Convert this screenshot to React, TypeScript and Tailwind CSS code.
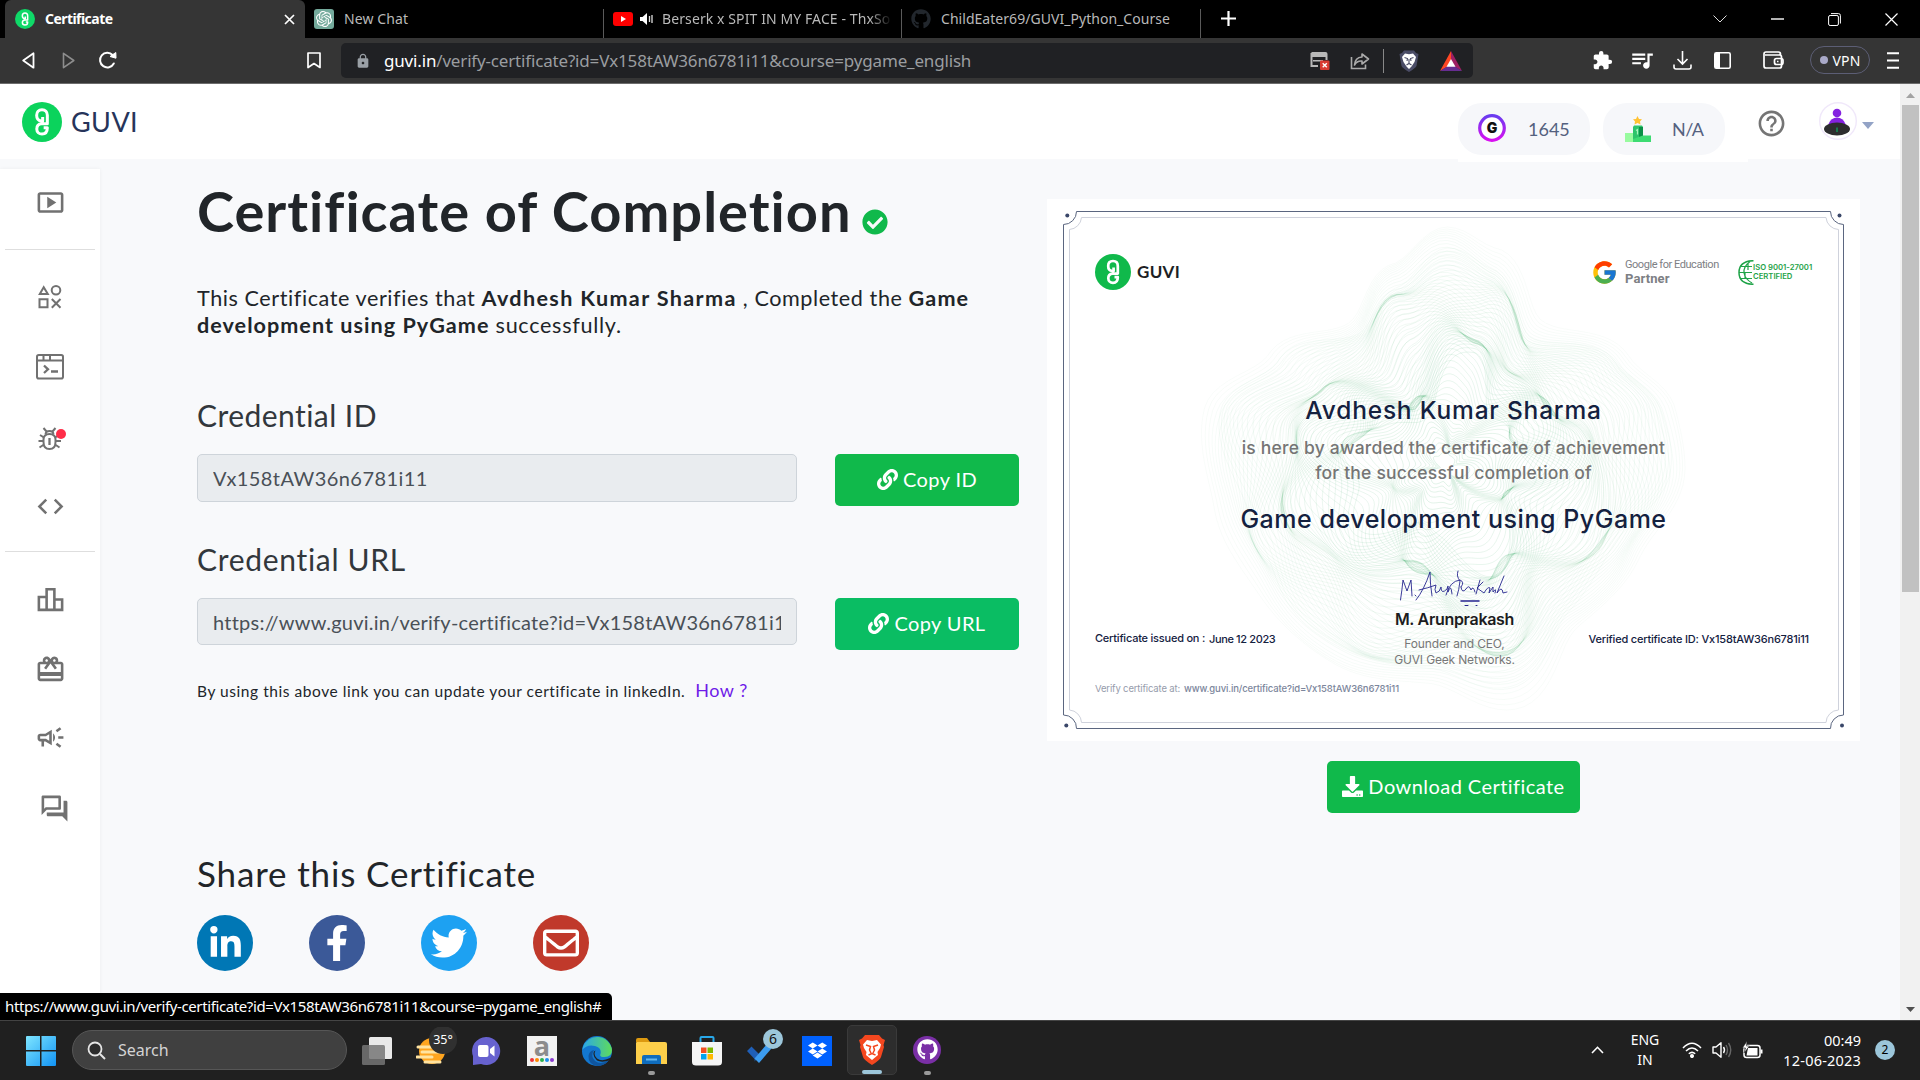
import React from "react";
import {
  FaCheckCircle,
  FaDownload,
  FaDropbox,
  FaFacebookF,
  FaGithub,
  FaLink,
  FaLinkedinIn,
  FaRegEnvelope,
  FaTwitter,
} from "react-icons/fa";
import { FcGoogle } from "react-icons/fc";
import {
  MdCode,
  MdExtension,
  MdHelpOutline,
  MdLock,
  MdOutlineCampaign,
  MdOutlineForum,
  MdOutlineLeaderboard,
  MdOutlineRedeem,
  MdOutlineSmartDisplay,
  MdQueueMusic,
} from "react-icons/md";
import { SiOpenai } from "react-icons/si";

const UI = "font-['Noto_Sans',sans-serif]";
const PAGE = "font-['Lato',sans-serif]";
const CERT = "font-['Inter',sans-serif]";

function GuviMark({ size, color }: { size: number; color: string }) {
  return (
    <svg width={size} height={size} viewBox="0 0 36 36" className="shrink-0">
      <circle cx="18" cy="18" r="18" fill={color} />
      <path
        d="M18.6 13.600V17H17.200C14.600 16.800 13.200 14.800 13.200 12C13.200 9 15 7 18 7C21 7 22.800 9 22.800 12V19.600H17.6C15 19.800 13.300 21.600 13.300 24.2C13.3 27 15.3 28.8 18 28.8C21 28.8 22.8 27 22.8 23.200H19.500"
        fill="none"
        stroke="#fff"
        strokeWidth="2.7"
        strokeLinejoin="round"
      />
    </svg>
  );
}

function TabBar() {
  return (
    <div className={`flex h-[38px] shrink-0 bg-black text-[14px] leading-[38px] text-[#b9b9b9] ${UI}`}>
      <div className="ml-[5px] flex h-[38px] w-[300px] items-center rounded-t-[6px] bg-[#353535] pl-[10px] text-white">
        <GuviMark size={20} color="#0fd968" />
        <span className="ml-[10px] text-[14px] font-bold tracking-[-0.55px]">Certificate</span>
        <svg width="11" height="11" viewBox="0 0 11 11" className="ml-auto mr-[10px]">
          <path d="M1 1L10 10M10 1L1 10" stroke="#fff" strokeWidth="1.7" />
        </svg>
      </div>
      <div className="flex w-[298px] items-center pl-[9px]">
        <span className="flex h-5 w-5 items-center justify-center rounded-[3px] bg-[#74aa9c] text-white">
          <SiOpenai size={16} />
        </span>
        <span className="ml-[10px] tracking-[0.1px]">New Chat</span>
      </div>
      <div className="mt-[9px] h-[29px] w-px bg-[#5a5a5a]" />
      <div className="flex w-[297px] items-center pl-[9px]">
        <svg width="20" height="14" viewBox="0 0 20 14" className="shrink-0">
          <rect width="20" height="14" rx="3" fill="#f00" />
          <path d="M8 4V10L13 7Z" fill="#fff" />
        </svg>
        <svg width="14" height="12" viewBox="0 0 14 12" className="ml-[7px] shrink-0">
          <path d="M0 4H2.500L7 0V12L2.500 8H0Z" fill="#fff" />
          <path d="M9.500 3V9M12 2V10" stroke="#ddd" strokeWidth="1.300" />
        </svg>
        <span className="ml-[8px] w-[230px] overflow-hidden whitespace-nowrap tracking-[0.1px] [mask-image:linear-gradient(to_right,black_90%,transparent)]">
          Berserk x SPIT IN MY FACE - ThxSo
        </span>
      </div>
      <div className="mt-[9px] h-[29px] w-px bg-[#5a5a5a]" />
      <div className="flex w-[298px] items-center pl-[9px]">
        <FaGithub size={20} color="#22272d" />
        <span className="ml-[10px] tracking-[0.04px]">ChildEater69/GUVI_Python_Course</span>
      </div>
      <div className="mt-[9px] h-[29px] w-px bg-[#5a5a5a]" />
      <svg width="15" height="15" viewBox="0 0 15 15" className="ml-[20px] mt-[11px]">
        <path d="M7.500 0V15M0 7.500H15" stroke="#fff" strokeWidth="2.200" />
      </svg>
      <div className="ml-auto mr-[22px] flex items-center gap-[44px]">
        <svg width="14" height="8" viewBox="0 0 14 8">
          <path d="M0.500 0.500L7 7L13.500 0.500" fill="none" stroke="#ddd" />
        </svg>
        <svg width="13" height="2" viewBox="0 0 13 2">
          <path d="M0 1H13" stroke="#fff" strokeWidth="1.400" />
        </svg>
        <svg width="13" height="13" viewBox="0 0 13 13" fill="none" stroke="#fff">
          <rect x="0.600" y="2.500" width="9.800" height="10" rx="1.500" />
          <path d="M3 0.600H10.500Q12.400 0.600 12.400 2.500V10.500" />
        </svg>
        <svg width="13" height="13" viewBox="0 0 13 13">
          <path d="M0.500 0.500L12.500 12.500M12.500 0.500L0.500 12.500" stroke="#fff" strokeWidth="1.200" />
        </svg>
      </div>
    </div>
  );
}

function ToolBar() {
  return (
    <div className={`flex h-[46px] shrink-0 items-center border-b border-[#6c6c6c] bg-[#353535] ${UI}`}>
      <svg width="13" height="17" viewBox="0 0 13 17" className="ml-[22px] mb-px">
        <path d="M11.500 1.300V15.700L1.200 8.500Z" fill="none" stroke="#fff" strokeWidth="1.800" strokeLinejoin="round" />
      </svg>
      <svg width="13" height="17" viewBox="0 0 13 17" className="mb-px ml-[27px]">
        <path d="M1.500 1.300V15.700L11.800 8.500Z" fill="none" stroke="#8d8d8d" strokeWidth="1.600" strokeLinejoin="round" />
      </svg>
      <svg width="19" height="19" viewBox="0 0 19 19" className="mb-px ml-[23px]">
        <path d="M15.800 12.500A7.300 7.300 0 1 1 14.600 4" fill="none" stroke="#fff" strokeWidth="2" strokeLinecap="round" />
        <path d="M12 5.500L17.800 1.500L18 7.200Z" fill="#fff" stroke="#fff" strokeLinejoin="round" />
      </svg>
      <svg width="14" height="17" viewBox="0 0 14 17" className="mb-px ml-[190px]">
        <path d="M1 1H13V15.500L7 11.500L1 15.500Z" fill="none" stroke="#fff" strokeWidth="1.700" strokeLinejoin="round" />
      </svg>
      <div className="ml-[20px] flex h-[35px] w-[1132px] items-center rounded-[5px] bg-[#202124]">
        <MdLock size={16} color="#9aa0a6" className="ml-[14px] shrink-0" />
        <span className="ml-[13px] whitespace-nowrap text-[17px] tracking-[-0.17px] text-[#9a9da0]">
          <span className="text-white">guvi.in</span>/verify-certificate?id=Vx158tAW36n6781i11&amp;course=pygame_english
        </span>
        <div className="ml-auto mr-[11px] flex shrink-0 items-center">
          <svg width="20" height="18" viewBox="0 0 20 18">
            <path d="M1.500 1H15.500Q16.500 1 16.500 2V8M1.500 1V14H8" fill="none" stroke="#b8b8b8" strokeWidth="2" />
            <path d="M1 1H17V5H1ZM3 8H13V9.500H3Z" fill="#b8b8b8" />
            <rect x="10" y="8.500" width="9.500" height="9.500" rx="1" fill="#d93a32" />
            <path d="M12.700 11.200L16.800 15.300M16.800 11.200L12.700 15.300" stroke="#fff" strokeWidth="1.400" />
          </svg>
          <svg width="20" height="18" viewBox="0 0 20 18" className="ml-[20px]" fill="none" stroke="#aaa" strokeWidth="1.600">
            <path d="M1.500 5V16.500H15.500V12.500" />
            <path d="M12 2L18.500 7L12 12V9Q7 8.500 4.500 13Q5 5.500 12 5Z" strokeLinejoin="round" />
          </svg>
          <div className="ml-[13px] h-[24px] w-px bg-[#888]" />
          <svg width="20" height="22" viewBox="0 0 20 22" className="ml-[15px]">
            <path d="M5 0.500H15L17 3L19.500 4L17.500 16Q16.500 18 10 22Q3.500 18 2.500 16L0.500 4L3 3Z" fill="#4a4c66" />
            <path d="M6 3.500L10 4.300L14 3.500L17 7L15.500 12L12.500 16.500L10 19L7.500 16.500L4.500 12L3 7Z" fill="#fff" />
            <path d="M5.500 7.500L8.500 8.500L8 11M14.500 7.500L11.500 8.500L12 11M10 9V13M7.500 15L10 13.500L12.500 15" fill="none" stroke="#4a4c66" strokeWidth="1.100" />
          </svg>
          <svg width="22" height="20" viewBox="0 0 22 20" className="ml-[21px]">
            <path d="M11 0L0 20L11 13.500Z" fill="#ff4724" />
            <path d="M11 0L22 20L11 13.500Z" fill="#9e1f63" />
            <path d="M0 20H22L11 13Z" fill="#662d91" />
            <path d="M11 8L6.500 15.800H15.500Z" fill="#fff" />
          </svg>
        </div>
      </div>
      <div className="mb-px ml-[119px] flex items-center text-white">
        <MdExtension size={21} />
        <MdQueueMusic size={26} className="ml-[16px]" />
        <svg width="19" height="19" viewBox="0 0 19 19" className="ml-[18px]" fill="none" stroke="#fff" strokeWidth="1.600">
          <path d="M9.500 0V13M4.500 8L9.500 13L14.500 8M1 13.500V16Q1 18 3 18H16Q18 18 18 16V13.500" />
        </svg>
        <svg width="17" height="17" viewBox="0 0 17 17" className="ml-[22px]">
          <rect x="0.800" y="0.800" width="15.400" height="15.400" rx="1.500" fill="none" stroke="#fff" strokeWidth="1.600" />
          <path d="M1 1H6V16H1Z" fill="#fff" />
        </svg>
        <svg width="21" height="18" viewBox="0 0 21 18" className="ml-[32px]" fill="none" stroke="#fff" strokeWidth="1.700">
          <path d="M17.500 4V3.500Q17.500 1 15.500 1H3Q1 1 1 3V15Q1 17 3 17H16.500Q18.500 17 18.500 15V6Q18.500 4 16.500 4H2" />
          <rect x="11.500" y="7.500" width="8.500" height="6" rx="2" />
          <path d="M14 10.500H15.500" />
        </svg>
        <div className="ml-[26px] flex h-[28px] w-[60px] items-center justify-center gap-[5px] rounded-full border-[1.5px] border-[#5c5e75] text-[14px] tracking-[0.1px]">
          <span className="h-[8px] w-[8px] rounded-full bg-[#a9a9c8]" />
          VPN
        </div>
        <svg width="12" height="17" viewBox="0 0 12 17" className="ml-[17px]">
          <path d="M0 1.200H12M0 8.500H12M0 15.800H12" stroke="#fff" strokeWidth="1.900" />
        </svg>
      </div>
    </div>
  );
}

function Header() {
  return (
    <header className={`flex h-[75px] shrink-0 bg-white ${PAGE}`}>
      <div className="ml-[22px] mt-[18px] flex h-[40px] items-center">
        <GuviMark size={40} color="#0bd35c" />
        <span className="ml-[9px] text-[27px] leading-[40px] tracking-[0.4px] text-[#26345a]">GUVI</span>
      </div>
      <div className="ml-auto mr-[8px] flex h-[78px] w-[290px] bg-white pt-[19px] text-[18px] text-[#54617f]">
        <div className="flex h-[52px] w-[132px] items-center rounded-[24px] bg-[#f6f7fa]">
          <svg width="28" height="28" viewBox="0 0 28 28" className="ml-[20px] mt-[-2px]">
            <defs>
              <linearGradient id="coin" x1="0" y1="0" x2="0" y2="1">
                <stop offset="0" stopColor="#6a3cf0" />
                <stop offset="1" stopColor="#d810f0" />
              </linearGradient>
            </defs>
            <circle cx="14" cy="14" r="12.300" fill="#fff" stroke="url(#coin)" strokeWidth="3.200" />
            <text x="14" y="19" textAnchor="middle" fontFamily="Inter" fontWeight="900" fontSize="14" fill="#111">G</text>
          </svg>
          <span className="ml-[22px]">1645</span>
        </div>
        <div className="ml-[13px] flex h-[52px] w-[122px] items-center rounded-[24px] bg-[#f6f7fa]">
          <svg width="26" height="26" viewBox="0 0 26 26" className="ml-[22px]">
            <path d="M0 17H8V26H0Z" fill="#98fb9f" />
            <path d="M8 11L9 9.500H17L18 11V26H8Z" fill="#2dc46b" />
            <path d="M14 11H18V26H14Z" fill="#0a9147" />
            <path d="M18 19.500H26V26H8V23Z" fill="#3ddb72" />
            <path d="M12.500 0L14 3L17 3.300L15 5.500L15.500 8.500L12.500 7L9.500 8.500L10 5.500L8 3.300L11 3Z" fill="#ffc233" />
            <path d="M11 14.500L12.500 13.500V18.500" stroke="#a9f5bd" strokeWidth="1.200" fill="none" />
          </svg>
          <span className="ml-[21px] tracking-[-0.6px]">N/A</span>
        </div>
      </div>
      <MdHelpOutline size={31} color="#757575" className="mt-[24px]" />
      <svg width="38" height="38" viewBox="0 0 38 38" className="ml-[32px] mt-[18px]">
        <circle cx="19" cy="19" r="18.300" fill="#fff" stroke="#f0e8fa" strokeWidth="1.400" />
        <circle cx="18" cy="11" r="4.300" fill="#8421e0" />
        <path d="M9.500 22Q12 15.500 18 15.500T26.500 22V25H9.500Z" fill="#8421e0" />
        <ellipse cx="18" cy="27" rx="13" ry="6.500" fill="#2c2c2e" />
        <path d="M17.200 25.500H18.800V30H17.200Z" fill="#168a55" />
      </svg>
      <svg width="12" height="7" viewBox="0 0 12 7" className="ml-[5px] mr-[26px] mt-[38px]">
        <path d="M0 0H12L6 7Z" fill="#93a3c6" />
      </svg>
    </header>
  );
}

function SideBar() {
  return (
    <nav className="mt-[10px] flex w-[100px] shrink-0 flex-col items-center bg-white text-[#717171] shadow-[0_0_4px_rgba(0,0,0,0.05)]">
      <MdOutlineSmartDisplay size={31} className="mt-[18px]" />
      <div className="mt-[31px] h-px w-[90px] bg-[#dedede]" />
      <svg width="24" height="24" viewBox="0 0 24 24" className="mt-[35px]" fill="none" stroke="#717171" strokeWidth="2">
        <path d="M5.700 2.200L1.800 9H9.800Z" />
        <circle cx="18" cy="5.300" r="4.300" />
        <path d="M1.500 14.200H9.500V22.200H1.500Z" />
        <path d="M13.800 14L22.500 22.700M22.500 14L13.800 22.700" />
      </svg>
      <svg width="28" height="26" viewBox="0 0 28 26" className="mt-[45px]" fill="none" stroke="#717171" strokeWidth="2">
        <rect x="1" y="1" width="26" height="23.500" rx="1.800" />
        <path d="M1 6.500H27M7.500 1V6.500M14 1V6.500" />
        <path d="M8 11.500L12 15.300L8 19M15 17.500H22" strokeWidth="2.300" />
      </svg>
      <div className="relative mt-[47px] h-[24px] w-[24px]">
        <svg width="24" height="24" viewBox="0 0 24 24" fill="none" stroke="#717171" strokeWidth="2">
          <path d="M5.500 12.500Q5.500 7 11.500 7T17.500 12.500V15Q17.500 22 11.500 22T5.500 15Z" />
          <path d="M7.500 7Q8 4 11.500 4T15.500 7M5.500 1L8.500 4.500M17.500 1L14.500 4.500M0.500 14H5M18 14H23M2 8L6 10.500M21 8L17 10.500M1.500 20.500L6 17.500M21.500 20.500L17 17.500" />
          <path d="M11.500 11V18" strokeWidth="2.300" />
        </svg>
        <span className="absolute left-[18px] top-[2px] h-[10px] w-[10px] rounded-full bg-[#ff2d48]" />
      </div>
      <MdCode size={31} className="mt-[40px]" />
      <div className="mt-[29px] h-px w-[90px] bg-[#dedede]" />
      <MdOutlineLeaderboard size={31} className="mt-[32px]" />
      <MdOutlineRedeem size={31} className="mt-[39px]" />
      <MdOutlineCampaign size={31} className="mt-[37px]" />
      <MdOutlineForum size={31} className="ml-[8px] mt-[40px]" />
    </nav>
  );
}

function CopyRow({ value, label, tint, field }: { value: string; label: string; tint: string; field: string }) {
  return (
    <div className="flex h-[52px]">
      <div className={`w-[600px] rounded-[5px] border border-[#ced4da] bg-[#e9ecef] px-[15px] ${field}`}>
        <div className="overflow-hidden whitespace-nowrap text-[20px] leading-[47px] text-[#495057]">{value}</div>
      </div>
      <button className={`ml-[38px] flex w-[184px] items-center justify-center gap-[5px] rounded-[5px] pb-[2px] text-[20px] tracking-[0.4px] text-white ${tint}`}>
        <FaLink size={21} />
        <span>{label}</span>
      </button>
    </div>
  );
}

function Details() {
  return (
    <section className={`ml-[97px] w-[822px] shrink-0 pt-[18px] text-[#212529] ${PAGE}`}>
      <h1 className="flex h-[68px] text-[56px] font-bold leading-[68px] tracking-[1px]">
        <span className="whitespace-nowrap">Certificate of Completion</span>
        <FaCheckCircle size={26} color="#10b94b" className="ml-[10px] mt-[32px]" />
      </h1>
      <p className="mt-[40px] whitespace-nowrap text-[21.6px] leading-[27px] tracking-[0.57px]">
        This Certificate verifies that <b className="tracking-[1.35px]">Avdhesh Kumar Sharma</b> , Completed the{" "}
        <b className="tracking-[1.1px]">Game</b>
        <br />
        <b className="tracking-[1.02px]">development using PyGame</b> <span className="tracking-[0.7px]">successfully.</span>
      </p>
      <h2 className="mt-[58px] text-[30px] leading-[36px] tracking-[0.45px] text-[#32373c]">Credential ID</h2>
      <div className="mt-[21px]">
        <CopyRow value="Vx158tAW36n6781i11" label="Copy ID" tint="bg-[#10b94b]" field="h-[48px] tracking-[0.43px]" />
      </div>
      <h2 className="mt-[35px] text-[30px] leading-[36px] tracking-[0.7px] text-[#32373c]">Credential URL</h2>
      <div className="mt-[21px]">
        <CopyRow
          value="https://www.guvi.in/verify-certificate?id=Vx158tAW36n6781i11"
          label="Copy URL"
          tint="bg-[#0abd63]"
          field="h-[47px] tracking-[0.24px]"
        />
      </div>
      <div className="mt-[28px] flex h-[24px] items-baseline whitespace-nowrap leading-[24px]">
        <span className="text-[15.5px] tracking-[0.56px]">By using this above link you can update your certificate in linkedIn.</span>
        <span className="ml-[10px] text-[18px] tracking-[0.5px] text-[#6f1be8]">How ?</span>
      </div>
      <h2 className="mt-[150px] text-[35px] leading-[42px] tracking-[0.85px]">Share this Certificate</h2>
      <div className="mt-[21px] flex gap-[56px] text-white">
        <span className="flex h-[56px] w-[56px] items-center justify-center rounded-full bg-[#0077b5]">
          <FaLinkedinIn size={35} />
        </span>
        <span className="flex h-[56px] w-[56px] items-center justify-center rounded-full bg-[#3b5998]">
          <FaFacebookF size={36} />
        </span>
        <span className="flex h-[56px] w-[56px] items-center justify-center rounded-full bg-[#1da1f2]">
          <FaTwitter size={36} />
        </span>
        <span className="flex h-[56px] w-[56px] items-center justify-center rounded-full bg-[#c0392b]">
          <FaRegEnvelope size={36} />
        </span>
      </div>
    </section>
  );
}

// Outer radius of the guilloche, by angle in degrees (clockwise from the right).
const RIM: [number, number][] = [
  [0, 238],
  [25, 212],
  [50, 205],
  [73, 250],
  [95, 215],
  [120, 225],
  [146, 226],
  [170, 236],
  [194, 250],
  [213, 212],
  [236, 176],
  [255, 212],
  [270, 242],
  [283, 226],
  [303, 176],
  [328, 214],
  [345, 236],
  [360, 238],
];

function rim(deg: number): number {
  for (let i = 1; i < RIM.length; i++) {
    const [b, rb] = RIM[i];
    if (deg <= b) {
      const [a, ra] = RIM[i - 1];
      const k = (1 - Math.cos((Math.PI * (deg - a)) / (b - a))) / 2;
      return ra + (rb - ra) * k;
    }
  }
  return RIM[0][1];
}

function contour(t: number, seed: number): string {
  const pts: string[] = [];
  for (let i = 0; i < 180; i++) {
    const a = (i / 180) * Math.PI * 2;
    const edge = rim(i * 2) * t + 30 * t * (1 - t);
    const fold =
      1 +
      (1 - t) *
        (0.3 * Math.sin(3 * a + 7 * t + seed) +
          0.22 * Math.sin(5 * a - 10 * t + seed * 2) +
          0.12 * Math.sin(8 * a + 13 * t + seed * 3));
    const r = edge * fold;
    const x = 400 + Math.cos(a) * r;
    const y = 270 + Math.sin(a) * r;
    pts.push(`${x.toFixed(1)} ${y.toFixed(1)}`);
  }
  return `M${pts.join("L")}Z`;
}

function CertificateArt() {
  const lines: { d: string; o: number }[] = [];
  for (let i = 0; i < 60; i++) {
    const t = 0.06 + (i / 59) * 0.94;
    lines.push({ d: contour(t, 0.6), o: 0.17 - 0.13 * t });
  }
  for (let i = 0; i < 36; i++) {
    const t = 0.35 + (i / 35) * 0.55;
    lines.push({ d: contour(t, 2.7), o: 0.16 - 0.12 * t });
  }
  return (
    <svg width="813" height="542" viewBox="0 0 813 542" className="absolute inset-0" fill="none">
      {lines.map((l, i) => (
        <path key={i} d={l.d} stroke="#1a9c4c" strokeWidth="0.8" opacity={l.o} />
      ))}
      <path
        d="M29.500 12.500H783.500A13 13 0 0 0 796.500 25.500V516A13 13 0 0 0 783.500 529.500H29.500A13 13 0 0 0 16.500 516V25.500A13 13 0 0 0 29.500 12.500Z"
        stroke="#5b6680"
      />
      <path
        d="M34.500 18.500H779A13 13 0 0 0 791.500 30.500V511A13 13 0 0 0 779 523.500H34.500A13 13 0 0 0 22.500 511V30.500A13 13 0 0 0 34.500 18.500Z"
        stroke="#cfd2dc"
      />
      <g fill="#3a4769">
        <circle cx="20.300" cy="16.500" r="2" />
        <circle cx="792.500" cy="16.500" r="2" />
        <circle cx="19.300" cy="526.500" r="2" />
        <circle cx="795" cy="526.500" r="2" />
      </g>
    </svg>
  );
}

function Certificate() {
  return (
    <div className={`relative h-[542px] w-[813px] overflow-hidden bg-white text-[#14213f] ${CERT}`}>
      <CertificateArt />
      <div className="relative flex h-full flex-col whitespace-nowrap pt-[55px]">
        <div className="flex h-[36px] items-center pl-[48px]">
          <GuviMark size={36} color="#10b94b" />
          <span className="ml-[6px] w-[456px] font-['Lato',sans-serif] text-[17px] font-bold tracking-[0.3px] text-[#1d1f24]">GUVI</span>
          <FcGoogle size={27} className="ml-[-2px] shrink-0" />
          <div className="ml-[7px] w-[113px] font-['Roboto',sans-serif] text-[#7d8084]">
            <div className="text-[11px] leading-[14px] tracking-[-0.45px]">Google for Education</div>
            <div className="text-[13px] font-bold leading-[14px] tracking-[0.1px]">Partner</div>
          </div>
          <svg width="16" height="25" viewBox="0 0 16 25" fill="none" stroke="#1fa348" strokeWidth="1.200">
            <path d="M15.500 0.700Q1 1 1 12.500T15.500 24.300" strokeWidth="1.500" />
            <path d="M12 1.500Q5 7 6 13T14 23M3 6.500H14M1 12.500H14M3 18.500H14M10 3V10M7 12V18" />
          </svg>
          <div className="ml-[-1px] mt-[2px] text-[7.7px] font-semibold leading-[8.7px] text-[#1fa348]">
            <div>ISO 9001-27001</div>
            <div>CERTIFIED</div>
          </div>
        </div>
        <div className="mt-[104px] text-center text-[24.5px] font-medium leading-[32px] tracking-[0.8px]">Avdhesh Kumar Sharma</div>
        <div className="mt-[10px] text-center text-[17.5px] font-medium leading-[24.5px] tracking-[0.2px] text-[#757575]">
          is here by awarded the certificate of achievement
          <br />
          for the successful completion of
        </div>
        <div className="mt-[18px] text-center text-[25px] font-medium leading-[32px] tracking-[0.53px]">
          Game development using PyGame
        </div>
        <svg
          width="108"
          height="40"
          viewBox="0 0 108 40"
          className="ml-[353px] mt-[33px] shrink-0"
          fill="none"
          stroke="#26268f"
          strokeWidth="0.9"
          strokeLinecap="round"
          strokeLinejoin="round"
        >
          <path d="M0.500 32Q2 22 3 12L7 23L11 12L12 28M15 27L16 28" />
          <path d="M16 32Q24 22 30 4Q30 16 32 28M19 22Q28 20 36 17Q34 22 36 25Q40 24 41 19Q41 27 47 21L48 18V24Q51 15 52 26" />
          <path d="M58 3Q56 8 60 13Q59 22 57 28M46 27Q50 13 60 12Q65 14 61 19M61 19Q62 26 66 21Q69 16 71 22Q73 17 75 24M80 12L76 26M83 14L77 20L84 25Q88 18 90 20L89 25L93 19V24Q97 19 95 25M104 8L97 25Q102 17 103 25L107 24" />
          <path d="M61 33H79" strokeWidth="1.500" />
          <path d="M65 37.500H68M76 37.500H77" strokeWidth="1" />
        </svg>
        <div className="mt-px flex h-[57px] text-[11px] font-medium leading-[16px]">
          <div className="ml-[48px] flex w-[291px] pt-[21px] tracking-[-0.22px]">
            <span className="w-[114px]">Certificate issued on :</span>
            <span className="pt-px tracking-[-0.37px]">June 12 2023</span>
          </div>
          <div className="w-[137px] text-center">
            <div className="text-[16px] font-semibold leading-[20px] tracking-[-0.3px] text-[#1c1c20]">M. Arunprakash</div>
            <div className="mt-[7px] text-[12px] font-normal leading-[15.5px] tracking-[-0.16px] text-[#777]">
              Founder and CEO,
              <br />
              GUVI Geek Networks.
            </div>
          </div>
          <div className="ml-auto mr-[51px] pt-[22px] tracking-[-0.19px]">Verified certificate ID: Vx158tAW36n6781i11</div>
        </div>
        <div className="ml-[48px] mt-[16px] flex text-[9.5px] leading-[14px] text-[#7c869c]">
          <span className="w-[89px] tracking-[-0.15px] text-[#969cac]">Verify certificate at:</span>
          <span className="font-medium tracking-[-0.13px]">www.guvi.in/certificate?id=Vx158tAW36n6781i11</span>
        </div>
      </div>
    </div>
  );
}

function StatusBubble() {
  return (
    <div
      className={`absolute bottom-0 left-0 h-[27px] w-[612px] whitespace-nowrap rounded-tr-[5px] bg-black pl-[5px] text-[15px] leading-[26px] tracking-[-0.39px] text-white ${UI}`}
    >
      https://www.guvi.in/verify-certificate?id=Vx158tAW36n6781i11&amp;course=pygame_english#
    </div>
  );
}

function TaskBar() {
  return (
    <div className={`flex h-[60px] shrink-0 items-center border-t border-[#454545] bg-[#202020] text-white ${UI}`}>
      <svg width="30" height="30" viewBox="0 0 30 30" className="ml-[26px]">
        <defs>
          <linearGradient id="win" x1="0" y1="0" x2="1" y2="1">
            <stop offset="0" stopColor="#7fe6ff" />
            <stop offset="1" stopColor="#1193f5" />
          </linearGradient>
        </defs>
        <path d="M0 1Q0 0 1 0H14V14H0ZM15.500 0H29Q30 0 30 1V14H15.500ZM0 15.500H14V30H1Q0 30 0 29ZM15.500 15.500H30V29Q30 30 29 30H15.500Z" fill="url(#win)" />
      </svg>
      <div className="mb-px ml-[16px] flex h-[40px] w-[275px] items-center rounded-full border border-[#565656] bg-[#404040] pl-[14px]">
        <svg width="19" height="19" viewBox="0 0 19 19">
          <circle cx="8" cy="8" r="6.500" fill="#2c2c2c" stroke="#e5e5e5" strokeWidth="1.800" />
          <path d="M13 13L18 18" stroke="#e5e5e5" strokeWidth="2" />
        </svg>
        <span className="ml-[12px] text-[16px] text-[#d4d4d4]">Search</span>
      </div>
      <svg width="30" height="28" viewBox="0 0 30 28" className="ml-[15px]">
        <rect x="7" y="0" width="23" height="22" rx="1.500" fill="#e9e9e9" />
        <rect x="0" y="8" width="23" height="20" rx="1.500" fill="#767676" opacity="0.85" />
      </svg>
      <svg width="42" height="40" viewBox="0 0 42 40" className="ml-[24px] mt-[-8px]">
        <circle cx="16" cy="24" r="13" fill="#ffa51f" />
        <path d="M2 20H18M6 25H28M1 30H16M9 35H24" stroke="#ffe3a0" strokeWidth="3" strokeLinecap="round" />
        <circle cx="27" cy="13" r="14" fill="#303030" />
        <text x="27" y="17" textAnchor="middle" fontFamily="Noto Sans" fontSize="12.500" fill="#fff">35°</text>
      </svg>
      <svg width="30" height="30" viewBox="0 0 30 30" className="ml-[13px]">
        <path d="M15 1A14 14 0 1 1 10 28L2 29V20A14 14 0 0 1 15 1Z" fill="#6762cf" />
        <rect x="7" y="9" width="10.500" height="12" rx="2" fill="#fff" />
        <path d="M19 13L23.500 9.500V20.500L19 17Z" fill="#fff" />
      </svg>
      <div className="ml-[26px] flex h-[30px] w-[30px] flex-col items-center bg-[#f2f2f2]">
        <span className="h-[22px] font-['Open_Sans',sans-serif] text-[27px] font-bold leading-[19px] text-[#8c8c8c]">a</span>
        <span className="flex gap-px">
          <i className="h-[4px] w-[4px] rounded-full bg-[#ee3338]" />
          <i className="h-[4px] w-[4px] rounded-full bg-[#ff8a00]" />
          <i className="h-[4px] w-[4px] rounded-full bg-[#2bb24c]" />
          <i className="h-[4px] w-[4px] rounded-full bg-[#1a8ff0]" />
          <i className="h-[4px] w-[4px] rounded-full bg-[#8a3ad0]" />
        </span>
      </div>
      <svg width="30" height="30" viewBox="0 0 30 30" className="ml-[25px]">
        <defs>
          <linearGradient id="edgeA" x1="0" y1="0.300" x2="1" y2="0.300">
            <stop offset="0" stopColor="#2aa6ea" />
            <stop offset="1" stopColor="#5fdc5a" />
          </linearGradient>
        </defs>
        <circle cx="15" cy="15" r="15" fill="#1377cf" />
        <path d="M1 11A15 15 0 0 1 30 14Q30 21 22.500 21Q17 21 18.500 18Q20 12 13 10Q5 8 0.300 14Z" fill="url(#edgeA)" />
        <path d="M12 14Q8 20 13 25Q19 29.500 27 24Q23 30 15 30Q6 28 6.500 20Q7 15 12 14Z" fill="#0f559f" />
        <path d="M13.500 14.500Q11 19 15 22.500Q20 26 28 22L31 21L28.500 24Q20 27 15 24.500Q10 20 12 15.500Z" fill="#202020" />
      </svg>
      <div className="ml-[24px] flex h-[60px] w-[31px] flex-col items-center pt-[17px]">
        <svg width="31" height="26" viewBox="0 0 31 26">
          <path d="M0 2Q0 0 2 0H11L14 4H0Z" fill="#dd9a10" />
          <path d="M0 5Q0 4 1 4H29Q31 4 31 6V26H0Z" fill="#fdcf4a" />
          <path d="M6 19Q6 17 8 17H23Q25 17 25 19V26H6Z" fill="#0f6cbd" />
          <path d="M10 21.500H21" stroke="#63b7ee" strokeWidth="2" />
        </svg>
        <span className="mt-[7px] h-[4px] w-[7px] rounded-full bg-[#9a9a9a]" />
      </div>
      <svg width="30" height="30" viewBox="0 0 30 30" className="ml-[25px]">
        <path d="M8.500 6V2Q8.500 1 9.500 1H20.500Q21.500 1 21.500 2V6" fill="none" stroke="#28a8ea" strokeWidth="2" />
        <path d="M0 6H30V26Q30 29.500 26 29.500H4Q0 29.500 0 26Z" fill="#f5f5f5" />
        <path d="M9 11.500H14.500V17H9Z" fill="#f25022" />
        <path d="M15.500 11.500H21V17H15.500Z" fill="#7fba00" />
        <path d="M9 18H14.500V23.500H9Z" fill="#00a4ef" />
        <path d="M15.500 18H21V23.500H15.500Z" fill="#ffb900" />
      </svg>
      <svg width="36" height="36" viewBox="0 0 36 36" className="ml-[25px] mt-[-10px]">
        <path d="M0 23L4.500 18.500L12 26L7.800 33.500L7.500 31Z" fill="#1f5fb8" />
        <path d="M7.500 30.500L22.500 13L27 17.500L12 35Z" fill="#3c9cf0" />
        <circle cx="26" cy="11" r="10" fill="#9cc6da" />
        <text x="26" y="16" textAnchor="middle" fontFamily="Noto Sans" fontSize="14" fill="#111">6</text>
      </svg>
      <div className="ml-[19px] flex h-[30px] w-[30px] items-center justify-center bg-[#0061fe] text-white">
        <FaDropbox size={19} />
      </div>
      <div className="mb-px ml-[15px] flex h-[50px] w-[50px] flex-col items-center rounded-[5px] border border-[#3a3a3a] bg-[#2d2d2d] pt-[9px]">
        <svg width="26" height="30" viewBox="0 0 26 30" className="shrink-0">
          <path d="M6 0H20L23 3.500L26 5L24.500 10L25 12L22 22Q21 25 13 30Q5 25 4 22L1 12L1.500 10L0 5L3 3.500Z" fill="#f4471f" />
          <path d="M8 5L13 6L18 5L22 9.500L21 13L18.500 17L19 20L13 25L7 20L7.500 17L5 13L4 9.500Z" fill="#fff" />
          <path d="M7 10L11.500 11.500L10.500 15L12 18M19 10L14.500 11.500L15.500 15L14 18M9.500 20L13 18.500L16.500 20" fill="none" stroke="#f4471f" strokeWidth="1.500" />
        </svg>
        <span className="mt-[5px] h-[4px] w-[20px] shrink-0 rounded-full bg-[#9cc6da]" />
      </div>
      <div className="ml-[16px] flex h-[60px] w-[28px] flex-col items-center pt-[15px]">
        <span className="flex h-[28px] w-[28px] items-center justify-center rounded-full bg-[#7a2fa6] text-white">
          <FaGithub size={21} />
        </span>
        <span className="mt-[7px] h-[4px] w-[7px] rounded-full bg-[#9a9a9a]" />
      </div>

      <svg width="13" height="8" viewBox="0 0 13 8" className="mb-px ml-[650px]">
        <path d="M1 7L6.500 1.300L12 7" fill="none" stroke="#fff" strokeWidth="1.600" />
      </svg>
      <div className="mb-px ml-[21px] w-[40px] text-center text-[14px] leading-[20px]">
        ENG
        <br />
        IN
      </div>
      <svg width="20" height="16" viewBox="0 0 20 16" className="mb-px ml-[17px]" fill="none" stroke="#fff" strokeWidth="1.500">
        <path d="M1 6Q10 -3.500 19 6M4 9Q10 3 16 9M6.800 11.800Q10 9 13.200 11.800" />
        <circle cx="10" cy="14" r="1.300" fill="#fff" />
      </svg>
      <svg width="20" height="18" viewBox="0 0 20 18" className="mb-px ml-[10px]" fill="none" stroke="#fff" strokeWidth="1.400">
        <path d="M1 6H4L9 1.800V16.200L4 12H1Z" strokeLinejoin="round" />
        <path d="M11.500 6Q13.500 9 11.500 12" />
        <path d="M14 4Q17 9 14 14M16.500 2Q21 9 16.500 16" stroke="#666" />
      </svg>
      <svg width="21" height="18" viewBox="0 0 21 18" className="mb-[2px] ml-[10px]">
        <rect x="2" y="4.500" width="16" height="12" rx="2.500" fill="none" stroke="#fff" strokeWidth="1.500" />
        <path d="M6 7H15.500V14.500H4.500Z" fill="#fff" />
        <path d="M18.500 8.500H20.500V12.500H18.500Z" fill="#fff" />
        <path d="M5 0L0.500 7H3.500L2 12L7.500 5H4.500Z" fill="#fff" stroke="#202020" strokeWidth="0.600" />
      </svg>
      <div className="mb-[2px] ml-auto w-[90px] text-right text-[14.5px] leading-[20px]">
        <span>00:49</span>
        <br />
        <span className="tracking-[0.2px]">12-06-2023</span>
      </div>
      <span className="mb-px ml-[14px] mr-[25px] flex h-[20px] w-[20px] items-center justify-center rounded-full bg-[#9cc6da] text-[12px] text-black">
        2
      </span>
    </div>
  );
}

export default function App() {
  return (
    <div className="flex h-[1080px] w-[1920px] flex-col overflow-hidden bg-[#f8f9fb]">
      <TabBar />
      <ToolBar />
      <div className="relative flex min-h-0 flex-1">
        <div className="flex min-w-0 flex-1 flex-col">
          <Header />
          <div className="flex min-h-0 flex-1">
            <SideBar />
            <Details />
            <div className="ml-[28px] flex w-[813px] flex-col items-center pt-[40px]">
              <Certificate />
              <button className={`mt-[20px] flex h-[52px] w-[253px] items-center justify-center gap-[5px] whitespace-nowrap rounded-[5px] bg-[#10b94b] pb-[2px] text-[20px] tracking-[0.45px] text-white ${PAGE}`}>
                <FaDownload size={21} />
                <span>Download Certificate</span>
              </button>
            </div>
          </div>
        </div>
        <div className="flex w-[20px] shrink-0 flex-col items-center bg-[#f1f1f1]">
          <svg width="9" height="5" viewBox="0 0 9 5" className="mt-[9px]">
            <path d="M0 5H9L4.500 0Z" fill="#a3a3a3" />
          </svg>
          <div className="mt-[7px] h-[487px] w-[17px] bg-[#c1c1c1]" />
          <svg width="9" height="5" viewBox="0 0 9 5" className="mb-[8px] mt-auto">
            <path d="M0 0H9L4.500 5Z" fill="#505050" />
          </svg>
        </div>
        <StatusBubble />
      </div>
      <TaskBar />
    </div>
  );
}
